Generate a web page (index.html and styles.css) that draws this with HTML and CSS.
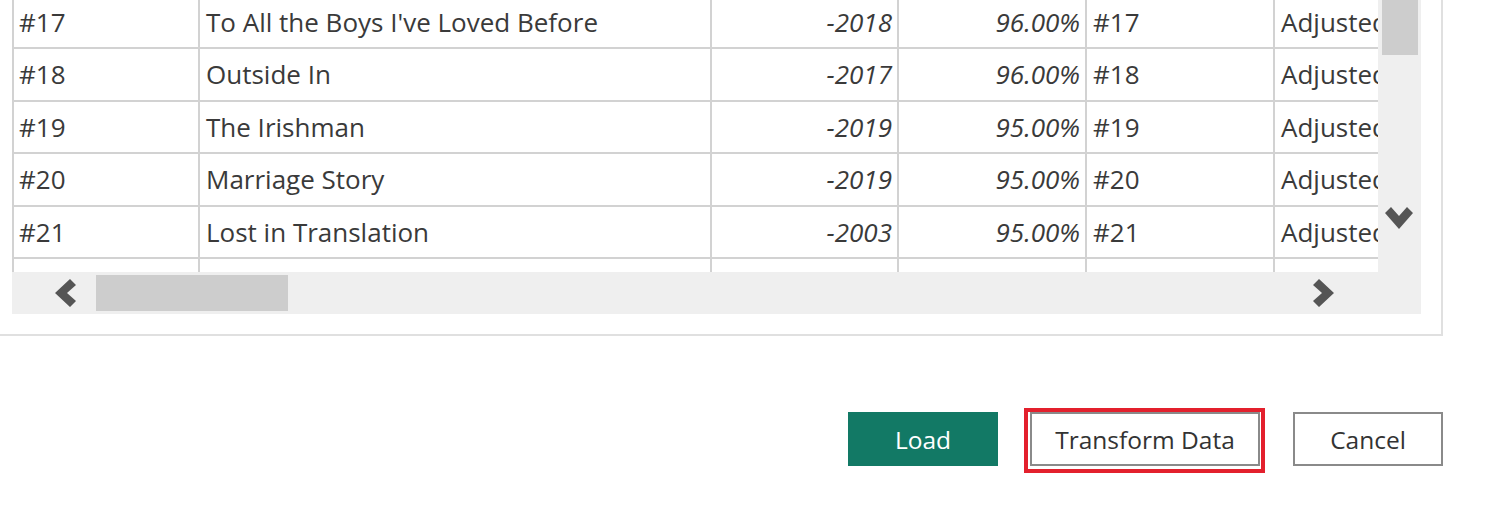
FILE: index.html
```html
<!DOCTYPE html>
<html>
<head>
<meta charset="utf-8">
<link rel="stylesheet" href="styles.css">
</head>
<body>
<div class="panel">
  <div class="viewer">
    <div class="data">
      <div class="table">
        <div class="row">
          <div class="cell">#17</div><div class="cell">To All the Boys I've Loved Before</div><div class="cell num">-2018</div><div class="cell num">96.00%</div><div class="cell">#17</div><div class="cell">Adjusted Score</div>
        </div>
        <div class="row">
          <div class="cell">#18</div><div class="cell">Outside In</div><div class="cell num">-2017</div><div class="cell num">96.00%</div><div class="cell">#18</div><div class="cell">Adjusted Score</div>
        </div>
        <div class="row">
          <div class="cell">#19</div><div class="cell">The Irishman</div><div class="cell num">-2019</div><div class="cell num">95.00%</div><div class="cell">#19</div><div class="cell">Adjusted Score</div>
        </div>
        <div class="row">
          <div class="cell">#20</div><div class="cell">Marriage Story</div><div class="cell num">-2019</div><div class="cell num">95.00%</div><div class="cell">#20</div><div class="cell">Adjusted Score</div>
        </div>
        <div class="row">
          <div class="cell">#21</div><div class="cell">Lost in Translation</div><div class="cell num">-2003</div><div class="cell num">95.00%</div><div class="cell">#21</div><div class="cell">Adjusted Score</div>
        </div>
        <div class="row">
          <div class="cell"></div><div class="cell"></div><div class="cell num"></div><div class="cell num"></div><div class="cell"></div><div class="cell"></div>
        </div>
      </div>
    </div>
    <div class="vscroll">
      <div class="vthumb"></div>
      <svg class="chev-down" width="28" height="23" viewBox="0 0 28 23"><polygon points="0,6 6,0 14,9 22,0 28,6 14,22" fill="#555"/></svg>
    </div>
    <div class="hscroll">
      <svg class="chev" width="23" height="28" viewBox="0 0 23 28"><polygon points="17,0 23,6 14,14 23,22 17,28 2,14" fill="#555"/></svg>
      <div class="hthumb"></div>
      <svg class="chev chev-right" width="23" height="28" viewBox="0 0 23 28"><polygon points="6,0 0,6 9,14 0,22 6,28 21,14" fill="#555"/></svg>
    </div>
    <div class="corner"></div>
  </div>
</div>
<div class="actions">
  <button class="btn btn-primary">Load</button>
  <div class="highlight"><button class="btn">Transform Data</button></div>
  <button class="btn">Cancel</button>
</div>
</body>
</html>
```
FILE: styles.css
```css
html, body {
  margin: 0;
  padding: 0;
  background: #ffffff;
}
body {
  width: 1507px;
  height: 507px;
  overflow: hidden;
  font-family: "Open Sans", "Noto Sans", sans-serif;
  color: #3a3a3a;
}
.panel {
  width: 1409px;
  padding: 0 20px 20px 12px;
  border-right: 2px solid #e0e0e0;
  border-bottom: 2px solid #e0e0e0;
}
.viewer {
  display: grid;
  grid-template-columns: 1366px 43px;
  grid-template-rows: 272px 42px;
}
.data {
  overflow: hidden;
  background: #fff;
}
.table {
  margin-top: -3.5px;
  border-left: 2px solid #d2d2d2;
  width: 1500px;
}
.row {
  display: grid;
  grid-template-columns: 186px 512px 187px 188px 188px 239px;
  height: 52.5px;
}
.cell {
  box-sizing: border-box;
  border-right: 2px solid #d2d2d2;
  border-bottom: 2px solid #d2d2d2;
  padding: 0 5px 0 5px;
  font-size: 26px;
  display: flex;
  align-items: center;
  white-space: nowrap;
  overflow: hidden;
}
.cell:nth-child(n+2) {
  padding-left: 6px;
}
.num {
  justify-content: flex-end;
  font-style: italic;
  padding-right: 5px;
}
.vscroll {
  background: #efefef;
  display: flex;
  flex-direction: column;
  align-items: flex-start;
}
.vthumb {
  margin-left: 4px;
  width: 36px;
  height: 55px;
  background: #cdcdcd;
}
.chev-down {
  margin-top: auto;
  margin-left: 7px;
  margin-bottom: 42px;
  display: block;
}
.hscroll {
  background: #efefef;
  display: flex;
  align-items: center;
  padding-left: 41px;
  padding-right: 42px;
}
.chev {
  display: block;
  flex: none;
}
.hthumb {
  margin-left: 20px;
  width: 192px;
  height: 36px;
  background: #cdcdcd;
}
.chev-right {
  margin-left: auto;
}
.corner {
  background: #efefef;
}
.actions {
  display: flex;
  justify-content: flex-end;
  align-items: flex-start;
  padding-right: 64px;
  margin-top: 76px;
}
.btn {
  box-sizing: border-box;
  width: 150px;
  height: 54px;
  border: 2px solid #8a8a8a;
  background: #fff;
  font-family: "Open Sans", "Noto Sans", sans-serif;
  font-size: 24.5px;
  color: #333;
  padding: 0;
  margin: 0;
}
.btn-primary {
  background: #127965;
  border-color: #127965;
  color: #fff;
}
.highlight {
  margin-top: -4px;
  margin-left: 26px;
  margin-right: 28px;
  border: 4px solid #e3202d;
  padding: 0 1px 3px 2px;
  display: flex;
}
.highlight .btn {
  width: 230px;
}
```
